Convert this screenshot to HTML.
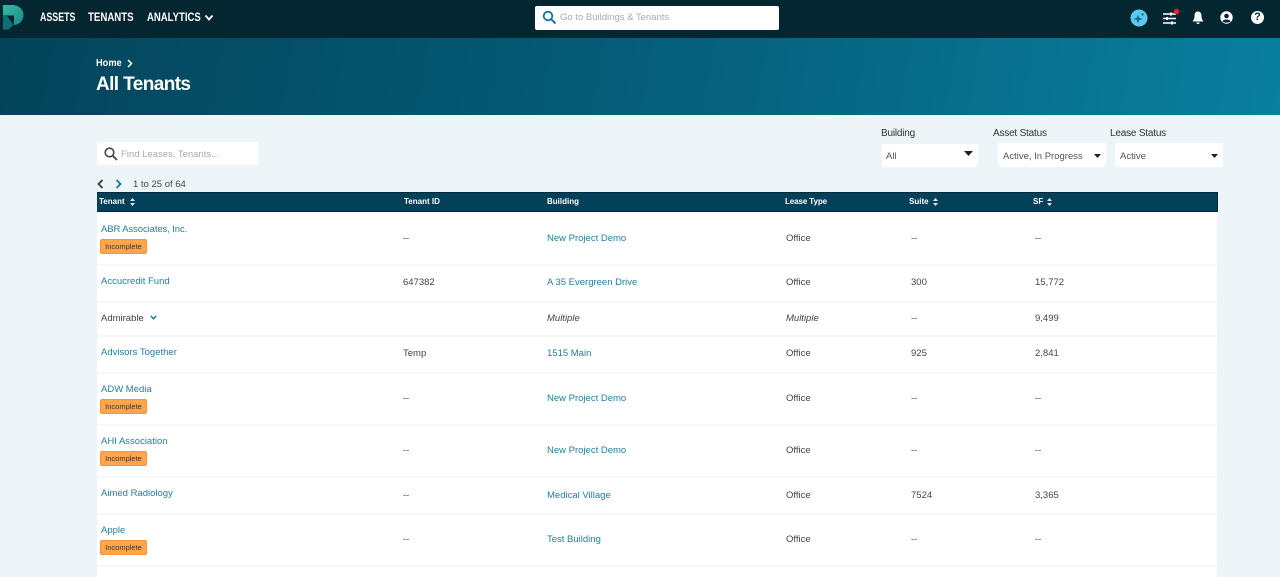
<!DOCTYPE html>
<html><head><meta charset="utf-8"><style>
*{box-sizing:border-box}
html,body{margin:0;padding:0;width:1280px;height:577px;overflow:hidden;background:#eef5f8;font-family:"Liberation Sans",sans-serif;color:#444}
.a{position:absolute;white-space:nowrap;line-height:14px}
#nav{position:absolute;left:0;top:0;width:1280px;height:38px;background:#032631}
#hero{position:absolute;left:0;top:38px;width:1280px;height:77px;background:linear-gradient(100deg,#03445a 0%,#055d79 50%,#0a7f9f 100%)}
.n{color:#fff;font-weight:bold;font-size:11.5px;top:11px;transform-origin:0 50%}
.box{position:absolute;background:#fff;border-radius:2px}
.l{font-size:10px;color:#333;top:127px;letter-spacing:-.2px}
.s{font-size:9.5px;color:#555}
.h{color:#fff;font-weight:bold;font-size:8px;top:195px}
.c{font-size:9.5px;color:#444}
.t{color:#1f7f9e}
.line{position:absolute;left:97px;width:1120px;height:2px;background:#f6f7f8}
.tag{position:absolute;left:100px;width:47px;height:15px;background:#ffa64d;border:1px solid #f2963c;border-radius:2px;font-size:7.5px;color:#333;text-align:center;line-height:13px}
</style></head><body>
<div id="nav"></div><div id="hero"></div>
<svg class="a" style="left:3px;top:5px" width="21" height="25" viewBox="0 0 21 25"><defs><linearGradient id="g" x1="0" y1="0" x2="1" y2="1"><stop offset="0" stop-color="#36b7a3"/><stop offset="1" stop-color="#1c8d8a"/></linearGradient></defs><path d="M0 0H9C16 0 20.500 4.500 20.500 10S16 20 11 20V10.500H0Z" fill="url(#g)"/><path d="M0 11H4L10 19V20.500L5.500 24.500H0Z" fill="#0f6f78"/></svg>
<div class="a n" style="left:40px;transform:scaleX(.77)">ASSETS</div>
<div class="a n" style="left:88px;transform:scaleX(.84)">TENANTS</div>
<div class="a n" style="left:147px;transform:scaleX(.83)">ANALYTICS</div>
<svg class="a" style="left:204px;top:14px" width="10" height="8" viewBox="0 0 10 8"><path d="M1.500 1.500L5 5.500L8.500 1.500" fill="none" stroke="#fff" stroke-width="1.800"/></svg>
<div class="box" style="left:535px;top:6px;width:244px;height:24px"></div>
<svg class="a" style="left:542px;top:10px" width="15" height="15" viewBox="0 0 15 15"><circle cx="6" cy="6" r="4.300" fill="none" stroke="#12769a" stroke-width="1.800"/><path d="M9.200 9.200L13.500 13.500" stroke="#12769a" stroke-width="2"/></svg>
<div class="a" style="left:560px;top:11px;font-size:9.500px;color:#aaa">Go to Buildings &amp; Tenants</div>
<svg class="a" style="left:1130px;top:9px" width="18" height="18" viewBox="0 0 18 18"><circle cx="9" cy="9" r="8.500" fill="#5bc8f0"/><path d="M8 5.500L9.200 8.800L12.500 10L9.200 11.200L8 14.500L6.800 11.200L3.500 10L6.800 8.800Z" fill="#0d6d94"/><circle cx="12.500" cy="5.500" r="1.200" fill="#0d6d94"/></svg>
<svg class="a" style="left:1163px;top:8px" width="18" height="17" viewBox="0 0 18 17"><path d="M0 6H13M0 10.500H13M0 15H13" stroke="#fff" stroke-width="1.500"/><rect x="7" y="4.500" width="2" height="3" fill="#fff"/><rect x="3" y="9" width="2" height="3" fill="#fff"/><rect x="8" y="13.500" width="2" height="3" fill="#fff"/><circle cx="13.500" cy="3.500" r="2.800" fill="#f01c2c"/></svg>
<svg class="a" style="left:1191px;top:11px" width="14" height="14" viewBox="0 0 14 14"><path d="M7 0.500C4.500 0.500 3.500 2.500 3.500 5C3.500 8 2.500 9 1.500 10.500H12.500C11.500 9 10.500 8 10.500 5C10.500 2.500 9.500 0.500 7 0.500Z" fill="#fff"/><path d="M5.300 11.500H8.700C8.700 13.500 5.300 13.500 5.300 11.500Z" fill="#fff"/></svg>
<svg class="a" style="left:1220px;top:11px" width="13" height="13" viewBox="0 0 13 13"><circle cx="6.500" cy="6.500" r="6.200" fill="#fff"/><circle cx="6.500" cy="5" r="2.300" fill="#032631"/><path d="M2.500 10.500C3.500 7.800 9.500 7.800 10.500 10.500C9 12 4 12 2.500 10.500Z" fill="#032631"/></svg>
<div class="a" style="left:1251px;top:11px;width:13px;height:13px;border-radius:50%;background:#fff;color:#032631;font-size:11px;font-weight:bold;line-height:13px;text-align:center">?</div>
<div class="a" style="left:96px;top:56px;color:#fff;font-size:10.500px;font-weight:bold;transform:scaleX(.88);transform-origin:0 50%">Home</div>
<svg class="a" style="left:127px;top:59px" width="6" height="9" viewBox="0 0 6 9"><path d="M1 1L4.500 4.500L1 8" fill="none" stroke="#fff" stroke-width="1.500"/></svg>
<div class="a" style="left:96px;top:74px;color:#fff;font-size:19px;font-weight:bold;line-height:22px;letter-spacing:-.6px">All Tenants</div>

<div class="box" style="left:97px;top:142px;width:161px;height:23px"></div>
<svg class="a" style="left:104px;top:147px" width="14" height="14" viewBox="0 0 14 14"><circle cx="5.500" cy="5.500" r="4.300" fill="none" stroke="#444" stroke-width="1.600"/><path d="M8.700 8.700L13 13" stroke="#444" stroke-width="1.900"/></svg>
<div class="a" style="left:121px;top:148px;font-size:9.500px;color:#aaa">Find Leases, Tenants...</div>
<div class="a l" style="left:881px">Building</div>
<div class="a l" style="left:993px">Asset Status</div>
<div class="a l" style="left:1110px">Lease Status</div>
<div class="box" style="left:882px;top:144px;width:96px;height:23px"></div>
<div class="box" style="left:998px;top:143px;width:108px;height:24px"></div>
<div class="box" style="left:1115px;top:143px;width:108px;height:24px"></div>
<div class="a s" style="left:886px;top:150px">All</div>
<div class="a s" style="left:1003px;top:150px">Active, In Progress</div>
<div class="a s" style="left:1120px;top:150px">Active</div>
<svg class="a" style="left:964px;top:151px" width="9" height="5"><path d="M0 0H9L4.500 5Z" fill="#222"/></svg>
<svg class="a" style="left:1094px;top:154px" width="7" height="4"><path d="M0 0H7L3.500 4Z" fill="#222"/></svg>
<svg class="a" style="left:1211px;top:154px" width="7" height="4"><path d="M0 0H7L3.500 4Z" fill="#222"/></svg>

<svg class="a" style="left:97px;top:179px" width="7" height="10" viewBox="0 0 7 10"><path d="M5.500 1L1.500 5L5.500 9" fill="none" stroke="#333" stroke-width="1.700"/></svg>
<svg class="a" style="left:115px;top:179px" width="7" height="10" viewBox="0 0 7 10"><path d="M1.500 1L5.500 5L1.500 9" fill="none" stroke="#12769a" stroke-width="1.700"/></svg>
<div class="a" style="left:133px;top:178px;font-size:9.500px;color:#444">1 to 25 of 64</div>

<div class="box" style="left:97px;top:212px;width:1120px;height:365px;border-radius:0"></div>
<div class="a" style="left:97px;top:192px;width:1121px;height:20px;background:#03405a;border-top:1px solid #022a3a;border-bottom:1px solid #022a3a;border-right:1px solid #022a3a"></div>
<div class="a h" style="left:99px">Tenant</div>
<div class="a h" style="left:404px">Tenant ID</div>
<div class="a h" style="left:547px">Building</div>
<div class="a h" style="left:785px;letter-spacing:-.1px">Lease Type</div>
<div class="a h" style="left:909px">Suite</div>
<div class="a h" style="left:1033px">SF</div>
<svg class="a" style="left:130px;top:198px" width="5" height="8"><path d="M0 3L2.500 0L5 3ZM0 5L2.500 8L5 5Z" fill="#dfe9ed"/></svg>
<svg class="a" style="left:933px;top:198px" width="5" height="8"><path d="M0 3L2.500 0L5 3ZM0 5L2.500 8L5 5Z" fill="#dfe9ed"/></svg>
<svg class="a" style="left:1047px;top:198px" width="5" height="8"><path d="M0 3L2.500 0L5 3ZM0 5L2.500 8L5 5Z" fill="#dfe9ed"/></svg>

<div class="line" style="top:264px"></div><div class="line" style="top:301px"></div><div class="line" style="top:335px"></div><div class="line" style="top:372px"></div><div class="line" style="top:424px"></div><div class="line" style="top:476px"></div><div class="line" style="top:513px"></div><div class="line" style="top:565px"></div>

<div class="a c t" style="left:101px;top:223px;letter-spacing:-.1px">ABR Associates, Inc.</div><div class="tag" style="top:239px">Incomplete</div>
<div class="a c" style="left:403px;top:232px">--</div><div class="a c t" style="left:547px;top:232px">New Project Demo</div><div class="a c" style="left:786px;top:232px">Office</div><div class="a c" style="left:911px;top:232px">--</div><div class="a c" style="left:1035px;top:232px">--</div>

<div class="a c t" style="left:101px;top:275px">Accucredit Fund</div>
<div class="a c" style="left:403px;top:276px">647382</div><div class="a c t" style="left:547px;top:276px">A 35 Evergreen Drive</div><div class="a c" style="left:786px;top:276px">Office</div><div class="a c" style="left:911px;top:276px">300</div><div class="a c" style="left:1035px;top:276px">15,772</div>

<div class="a c" style="left:101px;top:312px">Admirable</div>
<svg class="a" style="left:150px;top:315px" width="7" height="5" viewBox="0 0 7 5"><path d="M.8 .8L3.500 3.800L6.200 .8" fill="none" stroke="#12769a" stroke-width="1.400"/></svg>
<div class="a c" style="left:547px;top:312px;font-style:italic">Multiple</div><div class="a c" style="left:786px;top:312px;font-style:italic">Multiple</div><div class="a c" style="left:911px;top:312px">--</div><div class="a c" style="left:1035px;top:312px">9,499</div>

<div class="a c t" style="left:101px;top:346px">Advisors Together</div>
<div class="a c" style="left:403px;top:347px">Temp</div><div class="a c t" style="left:547px;top:347px">1515 Main</div><div class="a c" style="left:786px;top:347px">Office</div><div class="a c" style="left:911px;top:347px">925</div><div class="a c" style="left:1035px;top:347px">2,841</div>

<div class="a c t" style="left:101px;top:383px">ADW Media</div><div class="tag" style="top:399px">Incomplete</div>
<div class="a c" style="left:403px;top:392px">--</div><div class="a c t" style="left:547px;top:392px">New Project Demo</div><div class="a c" style="left:786px;top:392px">Office</div><div class="a c" style="left:911px;top:392px">--</div><div class="a c" style="left:1035px;top:392px">--</div>

<div class="a c t" style="left:101px;top:435px">AHI Association</div><div class="tag" style="top:451px">Incomplete</div>
<div class="a c" style="left:403px;top:444px">--</div><div class="a c t" style="left:547px;top:444px">New Project Demo</div><div class="a c" style="left:786px;top:444px">Office</div><div class="a c" style="left:911px;top:444px">--</div><div class="a c" style="left:1035px;top:444px">--</div>

<div class="a c t" style="left:101px;top:487px">Aimed Radiology</div>
<div class="a c" style="left:403px;top:489px">--</div><div class="a c t" style="left:547px;top:489px">Medical Village</div><div class="a c" style="left:786px;top:489px">Office</div><div class="a c" style="left:911px;top:489px">7524</div><div class="a c" style="left:1035px;top:489px">3,365</div>

<div class="a c t" style="left:101px;top:524px">Apple</div><div class="tag" style="top:540px">Incomplete</div>
<div class="a c" style="left:403px;top:533px">--</div><div class="a c t" style="left:547px;top:533px">Test Building</div><div class="a c" style="left:786px;top:533px">Office</div><div class="a c" style="left:911px;top:533px">--</div><div class="a c" style="left:1035px;top:533px">--</div>
</body></html>
